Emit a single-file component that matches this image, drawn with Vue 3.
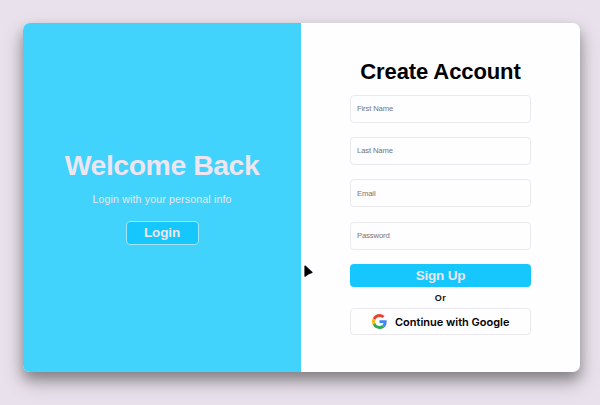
<script setup>
const fields = [
  { name: 'firstName', label: 'First Name', type: 'text' },
  { name: 'lastName', label: 'Last Name', type: 'text' },
  { name: 'email', label: 'Email', type: 'email' },
  { name: 'password', label: 'Password', type: 'password' },
]
</script>

<template>
  <main class="page">
    <div class="card">
      <section class="welcome">
        <h1>Welcome Back</h1>
        <p>Login with your personal info</p>
        <button class="login" type="button">Login</button>
      </section>
      <form class="signup" @submit.prevent>
        <h2>Create Account</h2>
        <div class="fields">
          <input v-for="f in fields" :key="f.name" :name="f.name" :type="f.type" :placeholder="f.label" />
        </div>
        <button class="submit" type="submit">Sign Up</button>
        <span class="or">Or</span>
        <button class="google" type="button">
          <svg viewBox="0 0 48 48" width="15" height="15">
            <path fill="#ea4335" d="M24 9.5c3.54 0 6.71 1.22 9.21 3.6l6.85-6.85C35.9 2.38 30.47 0 24 0 14.62 0 6.51 5.38 2.56 13.22l7.98 6.19C12.43 13.72 17.74 9.5 24 9.5z" />
            <path fill="#4285f4" d="M46.98 24.55c0-1.57-.15-3.09-.38-4.55H24v9.02h12.94c-.58 2.96-2.26 5.48-4.78 7.18l7.73 6c4.51-4.18 7.09-10.36 7.09-17.65z" />
            <path fill="#fbbc05" d="M10.53 28.59c-.48-1.45-.76-2.99-.76-4.59s.27-3.14.76-4.59l-7.98-6.19C.92 16.46 0 20.12 0 24c0 3.88.92 7.54 2.56 10.78l7.97-6.19z" />
            <path fill="#34a853" d="M24 48c6.48 0 11.93-2.13 15.89-5.81l-7.73-6c-2.15 1.45-4.92 2.3-8.16 2.3-6.26 0-11.57-4.22-13.47-9.91l-7.98 6.19C6.51 42.62 14.62 48 24 48z" />
          </svg>
          <span>Continue with Google</span>
        </button>
      </form>
    </div>
    <svg class="cursor" viewBox="0 0 10 13" width="10" height="13">
      <path d="M1 1 8 7.4 4.8 8.6 1 11.2Z" fill="#000" stroke="#000" stroke-width="1.2" stroke-linejoin="round" />
    </svg>
  </main>
</template>

<style>
body {
  margin: 0;
}
</style>

<style scoped>
.page {
  position: relative;
  box-sizing: border-box;
  width: 600px;
  height: 405px;
  padding: 23px 20px 0 23px;
  overflow: hidden;
  background: #e9e1eb;
  font-family: "Liberation Sans", Arial, sans-serif;
}
.card {
  display: grid;
  grid-template-columns: 278px 279px;
  height: 348.5px;
  border-radius: 7px;
  overflow: hidden;
  background: #fefdff;
  box-shadow: 0 10px 20px rgba(0, 0, 0, 0.25), 0 7px 12px rgba(0, 0, 0, 0.25);
}
button,
input {
  box-sizing: border-box;
  margin: 0;
  font-family: inherit;
}
.welcome {
  display: flex;
  flex-direction: column;
  align-items: center;
  padding-top: 124px;
  background: #41d3fc;
  color: #ede5ef;
  white-space: nowrap;
}
h1 {
  margin: 0;
  font-size: 28.4px;
  line-height: 36px;
  letter-spacing: -0.45px;
}
.welcome p {
  margin: 8px 0 0;
  font-size: 10.5px;
  line-height: 16px;
  letter-spacing: 0.19px;
}
.login {
  width: 73px;
  height: 24px;
  margin-top: 14px;
  padding: 0;
  border: 1px solid #a5e6fa;
  border-radius: 4px;
  background: #16c7fd;
  color: #ede5ef;
  font-size: 13.5px;
  font-weight: 700;
  line-height: 20px;
  letter-spacing: -0.15px;
}
.signup {
  display: flex;
  flex-direction: column;
  align-items: center;
  padding-top: 35px;
}
h2 {
  margin: 0;
  color: #000;
  font-size: 22px;
  line-height: 28px;
  letter-spacing: -0.1px;
  white-space: nowrap;
}
.fields {
  display: grid;
  gap: 14.3px;
  margin-top: 8.7px;
}
input {
  width: 181px;
  height: 28px;
  padding: 0 6px;
  border: 1px solid #ebe9ed;
  border-radius: 4px;
  outline: 0;
  background: transparent;
  font-size: 7.7px;
  letter-spacing: -0.15px;
}
input::placeholder {
  color: #757575;
  opacity: 1;
}
.submit {
  width: 181px;
  height: 23px;
  margin-top: 14px;
  padding: 0;
  border: 0;
  border-radius: 4px;
  background: #16c7fd;
  color: #ede5ef;
  font-size: 13.5px;
  font-weight: 700;
  letter-spacing: -0.2px;
}
.or {
  margin-top: 5px;
  color: #111;
  font-size: 9px;
  font-weight: 700;
  line-height: 12px;
  letter-spacing: 0.4px;
}
.google {
  display: flex;
  align-items: center;
  justify-content: center;
  gap: 8.5px;
  width: 181px;
  height: 27px;
  margin-top: 4.5px;
  padding: 0;
  border: 1px solid #ebe9ed;
  border-radius: 4px;
  background: transparent;
  color: #000;
  font-family: Inter, sans-serif;
  font-size: 11px;
  font-weight: 600;
  white-space: nowrap;
}
.cursor {
  position: absolute;
  left: 304px;
  top: 265px;
}
</style>
